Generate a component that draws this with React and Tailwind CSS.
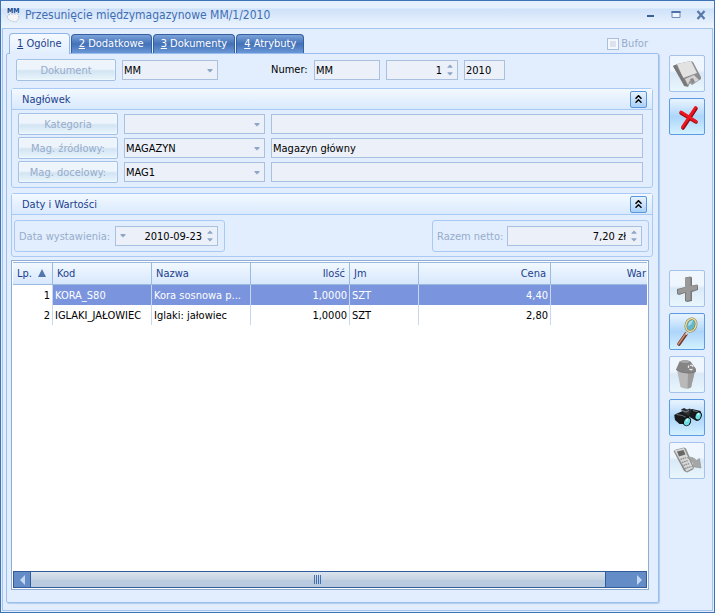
import { useState } from 'react';

const ArrowDown = ({ className = '' }) => (
    <svg viewBox="0 0 6 4" className={`h-[4px] w-[6px] shrink-0 fill-[#8fa6c6] ${className}`} aria-hidden="true">
        <path d="M.5 0h5v1L3 3.500.5 1z" />
    </svg>
);

const Spinner = () => (
    <svg viewBox="0 0 6 12" className="mr-[4px] h-[12px] w-[6px] shrink-0 fill-[#8fa6c6]" aria-hidden="true">
        <path d="M3 .5l2.500 2.500v.7h-5V3zM.5 8.300h5V9L3 11.500.5 9z" />
    </svg>
);

const LookupButton = ({ children }) => (
    <button
        type="button"
        className="h-[22px] w-[100px] shrink-0 rounded-[2px] border border-[#a3c0e6] bg-linear-to-b from-[#eef4fb] from-45% via-[#d3e4f3] via-55% to-[#e9f6fb] pt-px text-center text-[#96accb] shadow-[inset_0_0_2px_#ffffff]"
    >
        {children}
    </button>
);

const SelectField = ({ label, value, className }) => (
    <div className={`relative h-[20px] shrink-0 border border-[#a9c0e0] bg-[#ecf0f9] ${className}`}>
        <select aria-label={label} defaultValue={value} className="block h-[18px] w-full appearance-none pt-px pl-px text-black">
            <option>{value}</option>
        </select>
        <ArrowDown className="pointer-events-none absolute top-[8px] right-[4px]" />
    </div>
);

const TextField = ({ label, value, className = '' }) => (
    <input
        type="text"
        aria-label={label}
        defaultValue={value}
        className={`h-[20px] border border-[#a9c0e0] bg-[#ecf0f9] pl-px text-black ${className}`}
    />
);

const SpinField = ({ id, value, dropdown, className }) => (
    <div className={`flex h-[20px] items-center border border-[#a9c0e0] bg-[#ecf0f9] ${className}`}>
        {dropdown && <ArrowDown className="ml-[4px]" />}
        <input
            id={id}
            type="text"
            defaultValue={value}
            className="h-[18px] w-full min-w-0 flex-1 pr-[5px] text-right text-black"
        />
        <Spinner />
    </div>
);

const Group = ({ title, children }) => {
    const [open, setOpen] = useState(true);

    return (
        <section className="rounded-[3px] border border-[#a9caf3]">
            <div className="flex h-[21px] items-center justify-between border-b border-[#a9caf3] bg-linear-to-b from-[#f3f9ff] to-[#d9e9fd] pr-[5px] pl-[10px]">
                <h2 className="pt-px text-[#1c418c]">{title}</h2>
                <button
                    type="button"
                    aria-label={title}
                    onClick={() => setOpen(!open)}
                    className="flex h-[17px] w-[17px] items-center justify-center rounded-[2px] border border-[#5a96dc] bg-linear-to-b from-[#e8f3fe] to-[#a9d0f7]"
                >
                    <svg viewBox="0 0 7 8" className="h-[8px] w-[7px] fill-none stroke-black stroke-[1.5]">
                        <path d="M.5 3.700l3-3 3 3M.5 7.700l3-3 3 3" />
                    </svg>
                </button>
            </div>
            {open && children}
        </section>
    );
};

const SaveIcon = () => (
    <>
        <path d="M4 11l4-2 14-3 2 1 8 15v2l-9 6-2-2-2 4-4-1z" fill="#8d8d8d" />
        <path d="M8 9l14-3 6 12-14 5z" fill="#e2e2e2" />
        <path d="M4 11l3-1 12 21-3 0z" fill="#777" />
        <path d="M16 24l9-4 5 5-7 4-2-4-2 5z" fill="#d4d4d4" />
        <path d="M21 24l3-1 2 4-3 2z" fill="#8a8a8a" />
    </>
);

const CloseIcon = () => (
    <g fill="none" strokeLinecap="round">
        <path d="M27 10.500L14 30M12 15l15 9" stroke="#8f0a10" strokeWidth="3.500" />
        <path d="M26.500 9.500L13.500 29M12 14l15 9.500" stroke="#ee151c" strokeWidth="2.800" />
    </g>
);

const AddIcon = () => (
    <g>
        <path d="M16 7.500l5.500-1 1.500 1v8l5-1 1 1v4.500l-6 2v9l-5 1-2-1v-8l-6 2-2-1v-5l8-2z" fill="#777" />
        <path d="M16 8l5.500-1v9l6.500-1v4.500l-6.500 1.500v9l-4.500 1v-9l-8 2v-4.500l7-2z" fill="#999" />
    </g>
);

const ZoomIcon = () => (
    <>
        <path d="M17 21L10 31" stroke="#6e3428" strokeWidth="3.600" strokeLinecap="round" />
        <path d="M16.500 21L9.500 31" stroke="#c98a6f" strokeWidth="1.500" strokeLinecap="round" />
        <path d="M19.500 17.500l-2.500 4" stroke="#d8d8d8" strokeWidth="2" />
        <ellipse cx="22" cy="12" rx="5" ry="6.500" transform="rotate(20 22 12)" fill="#63b6cb" stroke="#8d8150" strokeWidth="2.500" />
        <ellipse cx="22" cy="12" rx="5" ry="6.500" transform="rotate(20 22 12)" fill="none" stroke="#eee3a4" strokeWidth="1.300" />
        <path d="M19 13q0-5 5-6-1 5-5 6z" fill="#a9dce8" />
    </>
);

const TrashIcon = () => (
    <>
        <path d="M8 14l3.500 17q5.500 3 10.500.5L26 15z" fill="#b9b9b9" />
        <path d="M19 17l7-2-4 16.500-3.500 1.300z" fill="#9c9c9c" />
        <path d="M7 13.500L10.500 5.500q5.500-2.500 11 0L27 13v2.500q-4 2-9.500 1.500-7-.5-10.500-3.500z" fill="#858585" />
        <path d="M10.500 5.500q5.500-2.500 11 0l-3 1.500q-5 .5-8-1.500z" fill="#a8a8a8" />
        <path d="M7 13.500q4 3 10.500 3.500 5.500.5 9.500-1.500" fill="none" stroke="#6f6f6f" strokeWidth=".7" />
        <path d="M21 9.500q2.500-1 3 1.500M23.500 13q-1.500 1.500-3 0M19.500 12q-.5-1.500.5-2.500" fill="none" stroke="#e6e6e6" strokeWidth="1.300" />
    </>
);

const SearchIcon = () => (
    <>
        <path d="M8 14.500l8-3.500 5 5-1 3-5 6-4.500 0-4.500-4-.8-5z" fill="#17191b" />
        <path d="M19 11.500l4-1.500 8.500 2 1.500 4-2.500 5-3 1-6-3.500-3-3z" fill="#17191b" />
        <path d="M12 10.500l3-1.500 3 1.500 3-1 1.500 2-3 5.500-5-3z" fill="#2b2f32" />
        <path d="M7.500 15.500l6 1 3.500 2M24 11.500l5 1.500" fill="none" stroke="#6d7478" strokeWidth="1" />
        <path d="M13 11.500l4 1.500 3-1.500" fill="none" stroke="#999fa3" strokeWidth=".8" />
        <ellipse cx="18" cy="22.500" rx="4" ry="4.800" transform="rotate(25 18 22.500)" fill="#111" />
        <ellipse cx="18.200" cy="22.700" rx="2.800" ry="3.800" transform="rotate(25 18 22.500)" fill="#6edfe0" />
        <ellipse cx="29" cy="17" rx="3.600" ry="4.600" transform="rotate(20 29 17)" fill="#111" />
        <ellipse cx="29.200" cy="17" rx="2.500" ry="3.500" transform="rotate(20 29 17)" fill="#6edfe0" />
        <path d="M17 22l2-2M28.500 16l1.500-1.500" stroke="#d4ffff" strokeWidth="1.300" />
    </>
);

const PhoneIcon = () => (
    <>
        <path d="M4.500 9L7 7.500l8-2 2 1 8 19-1 2-6 3-3-1.500z" fill="#8e8e8e" />
        <path d="M5.500 8.500L15 6l9 20-6.500 3.500z" fill="#dadada" />
        <path d="M8 9.500L14.500 8l2 4.500L10 14.500z" fill="#686868" />
        <path d="M11.500 17.500l6-2M13 20.500l6-2M14.500 23.500l6-2M16 26.500l6-2" stroke="#949494" strokeWidth="1.500" strokeDasharray="1.600 .6" />
        <path d="M18 15.500q6-1.500 9.500 3l3-2 1.500 9.500-9.500-1.500 2.500-2.500q-2.500-4-7-6.500z" fill="#a6a6a6" stroke="#8a8a8a" strokeWidth=".5" />
    </>
);

const ToolButton = ({ label, icon: Icon, active }) => (
    <button
        type="button"
        aria-label={label}
        className={`block h-[37px] w-[36px] rounded-[2px] border bg-linear-to-b ${
            active
                ? 'border-[#5c9ae2] from-[#e5f2fe] from-5% via-[#add5fa] via-50% to-[#d3f1ff]'
                : 'border-[#a5c2e8] from-[#f0f6fd] from-40% via-[#d9e9f7] via-50% to-[#e9f6fc]'
        }`}
    >
        <svg viewBox="1 1 34 35" className="h-[35px] w-[34px]">
            <Icon />
        </svg>
    </button>
);

const tabs = ['Ogólne', 'Dodatkowe', 'Dokumenty', 'Atrybuty'];

const warehouses = [
    { button: 'Kategoria', code: '', name: '' },
    { button: 'Mag. źródłowy:', code: 'MAGAZYN', name: 'Magazyn główny' },
    { button: 'Mag. docelowy:', code: 'MAG1', name: '' },
];

const items = [
    { lp: 1, code: 'KORA_S80', name: 'Kora sosnowa p...', qty: '1,0000', unit: 'SZT', price: '4,40' },
    { lp: 2, code: 'IGLAKI_JAŁOWIEC', name: 'Iglaki: jałowiec', qty: '1,0000', unit: 'SZT', price: '2,80' },
];

const TitleBar = () => (
    <header className="flex h-[27px] items-center bg-linear-to-b from-[#e4f0fe] from-25% via-[#cfe2f9] via-30% to-[#edf5fe] pr-[8px] pl-[5px]">
        <svg viewBox="0 0 16 18" className="h-[18px] w-[16px]" aria-hidden="true">
            <path d="M2 9l3-1h7l1 4-3 4-5-1-4-3z" fill="#f5f5f7" stroke="#a9b3c6" strokeWidth=".7" strokeDasharray="2 1" />
            <text x="1" y="7" className="fill-[#174a8c] font-['DejaVu_Sans_Condensed'] text-[7px] font-bold">MM</text>
        </svg>
        <h1 className="ml-[3px] flex-1 text-[12px] text-[#3f6db3]">Przesunięcie międzymagazynowe MM/1/2010</h1>
        <div className="flex gap-[15px]">
            <button type="button" aria-label="Minimalizuj">
                <svg viewBox="0 0 10 10" className="h-[10px] w-[10px]"><path d="M1 5h7v2H1z" fill="#3c5f94" /></svg>
            </button>
            <button type="button" aria-label="Maksymalizuj">
                <svg viewBox="0 0 10 10" className="h-[10px] w-[10px]">
                    <path d="M1 1.500h8v6H1z" fill="#f1f6fd" stroke="#6b8cbc" /><path d="M.5 1h9v2h-9z" fill="#4d73aa" />
                </svg>
            </button>
            <button type="button" aria-label="Zamknij">
                <svg viewBox="0 0 10 10" className="h-[10px] w-[10px]"><path d="M1.500 1l7 8M8.500 1l-7 8" stroke="#5878a8" strokeWidth="2.200" /></svg>
            </button>
        </div>
    </header>
);

const Tabs = () => (
    <div className="flex h-[20px] items-end gap-px pr-[11px] pl-[3px]">
        {tabs.map((tab, i) => (
            <button
                key={tab}
                type="button"
                className={
                    i === 0
                        ? 'relative z-10 -mb-px h-[21px] shrink-0 rounded-t-[4px] border border-b-0 border-[#8fb5e9] bg-linear-to-b from-[#f5faff] to-[#e2eefe] px-[7px] text-[#1c418c]'
                        : 'h-[19px] shrink-0 rounded-t-[4px] border border-b-0 border-[#365f9f] bg-linear-to-b from-[#7ca3da] via-[#4472b8] via-50% to-[#6a97d6] px-[7px] text-white'
                }
            >
                <span className="underline">{i + 1}</span> {tab}
            </button>
        ))}
        <label className="mb-[2px] ml-auto flex items-center gap-[2px] text-[#96accb]">
            <input
                type="checkbox"
                className="h-[12px] w-[12px] appearance-none border border-[#a9c0e0] bg-[#dce3ef] shadow-[inset_0_0_0_2px_#f4f7fc]"
            />
            Bufor
        </label>
    </div>
);

const ItemsTable = () => {
    const th = 'border-y border-r border-[#9cb9df] pt-px font-normal';

    return (
        <div className="mt-[3px] mr-[4px] flex flex-1 flex-col border border-[#8fadd4] bg-white p-px">
            <div className="flex-1 overflow-hidden">
                <table className="w-full table-fixed border-separate border-spacing-0 whitespace-nowrap">
                    <colgroup>
                        <col className="w-[40px]" />
                        <col className="w-[99px]" />
                        <col className="w-[99px]" />
                        <col className="w-[99px]" />
                        <col className="w-[69px]" />
                        <col className="w-[132px]" />
                        <col />
                    </colgroup>
                    <thead>
                        <tr className="h-[23px] bg-linear-to-b from-[#f3f9ff] to-[#d6e7fc] text-left text-[#1c418c]">
                            <th className={`${th} pl-[4px]`}>
                                Lp.
                                <svg viewBox="0 0 8 8" className="ml-[6px] inline h-[8px] w-[8px] align-baseline"><path d="M4 0l4 8H0z" fill="#5476ad" /></svg>
                            </th>
                            <th className={`${th} pl-[4px]`}>Kod</th>
                            <th className={`${th} pl-[4px]`}>Nazwa</th>
                            <th className={`${th} pr-[4px] text-right`}>Ilość</th>
                            <th className={`${th} pl-[4px]`}>Jm</th>
                            <th className={`${th} pr-[4px] text-right`}>Cena</th>
                            <th className="border-y border-[#9cb9df] pt-px pr-px text-right font-normal">War</th>
                        </tr>
                    </thead>
                    <tbody className="[&_td]:border-r [&_td]:border-[#c5d8f0] [&_td]:pt-[2px] [&_td:last-child]:border-r-0">
                        {items.map((item, i) => (
                            <tr key={item.lp} className={i === 0 ? 'h-[20px] bg-[#7a94dd] text-white' : 'h-[20px] text-black'}>
                                <td className="bg-white pr-[2px] text-right text-black">{item.lp}</td>
                                <td className="pl-[2px]">{item.code}</td>
                                <td className="pl-[2px]">{item.name}</td>
                                <td className="pr-[2px] text-right">{item.qty}</td>
                                <td className="pl-[2px]">{item.unit}</td>
                                <td className="pr-[2px] text-right">{item.price}</td>
                                <td />
                            </tr>
                        ))}
                    </tbody>
                </table>
            </div>
            <div className="flex h-[17px] border border-[#305c9c] bg-[#648dc8]">
                <button type="button" aria-label="W lewo" className="flex w-[16px] items-center justify-center">
                    <svg viewBox="0 0 5 10" className="h-[10px] w-[5px]"><path d="M5 0v10L0 5z" fill="#c4d8f2" /></svg>
                </button>
                <div className="flex flex-1 items-center justify-center border-x border-[#305c9c] bg-linear-to-b from-[#dde5ed] from-0% via-[#c6d4e3] via-45% to-[#c3d3e5] shadow-[inset_0_-7px_0_#adc2db80]">
                    <svg viewBox="0 0 8 9" className="h-[9px] w-[8px]"><path d="M.5 0v9M2.500 0v9M4.500 0v9M6.500 0v9" stroke="#4470af" /></svg>
                </div>
                <button type="button" aria-label="W prawo" className="flex w-[40px] items-center justify-end pr-[4px]">
                    <svg viewBox="0 0 5 10" className="h-[10px] w-[5px]"><path d="M0 0v10l5-5z" fill="#c4d8f2" /></svg>
                </button>
            </div>
        </div>
    );
};

const App = () => {
    return (
        <div className="flex min-h-screen flex-col border border-[#3e73b3] bg-[#e2eefe] font-['DejaVu_Sans_Condensed','DejaVu_Sans',sans-serif] text-[11px] leading-[14px]">
            <TitleBar />
            <div className="mx-px mb-px flex flex-1 border border-[#a2c4ef]">
                <main className="flex min-w-0 flex-1 flex-col pt-[4px] pb-[7px] pl-[3px]">
                    <Tabs />
                    <div className="flex flex-1 flex-col rounded-[2px] border border-[#9abfee] pr-[5px] pb-[12px] pl-[4px] shadow-[1px_1px_1px_#b5cdec]">
                        <div className="mt-[5px] mb-[7px] flex h-[22px] items-center gap-[6px] pl-[5px]">
                            <LookupButton>Dokument</LookupButton>
                            <SelectField label="Dokument" value="MM" className="w-[96px]" />
                            <label htmlFor="number" className="ml-[47px] w-[37px] whitespace-nowrap text-black">Numer:</label>
                            <TextField label="Symbol" value="MM" className="w-[66px]" />
                            <SpinField id="number" value="1" className="w-[72px]" />
                            <TextField label="Rok" value="2010" className="w-[41px]" />
                        </div>
                        <Group title="Nagłówek">
                            <div className="flex flex-col gap-[2px] pt-[3px] pr-[9px] pb-[4px] pl-[6px]">
                                {warehouses.map((row) => (
                                    <div key={row.button} className="flex items-center gap-[6px]">
                                        <LookupButton>{row.button}</LookupButton>
                                        <SelectField label={row.button} value={row.code} className="w-[141px]" />
                                        <TextField label={`${row.button} nazwa`} value={row.name} className="min-w-0 flex-1" />
                                    </div>
                                ))}
                            </div>
                        </Group>
                        <div className="mt-[5px]">
                            <Group title="Daty i Wartości">
                                <div className="flex justify-between pt-[5px] pr-[3px] pb-[4px] pl-[2px]">
                                    <div className="flex h-[32px] w-[211px] items-center justify-between rounded-[3px] border border-[#a9caf3] pr-[6px] pl-[4px]">
                                        <label htmlFor="date" className="pt-px whitespace-nowrap text-[#96accb]">Data wystawienia:</label>
                                        <SpinField id="date" value="2010-09-23" dropdown className="w-[103px]" />
                                    </div>
                                    <div className="flex h-[32px] w-[217px] items-center justify-between rounded-[3px] border border-[#a9caf3] pr-[6px] pl-[4px]">
                                        <label htmlFor="total" className="pt-px whitespace-nowrap text-[#96accb]">Razem netto:</label>
                                        <SpinField id="total" value="7,20 zł" className="w-[135px]" />
                                    </div>
                                </div>
                            </Group>
                        </div>
                        <ItemsTable />
                    </div>
                </main>
                <aside className="flex shrink-0 flex-col gap-[6px] pt-[26px] pr-[7px] pl-[10px]">
                    <ToolButton label="Zapisz" icon={SaveIcon} />
                    <ToolButton label="Anuluj" icon={CloseIcon} active />
                    <div className="h-[123px]" />
                    <ToolButton label="Dodaj" icon={AddIcon} />
                    <ToolButton label="Podgląd" icon={ZoomIcon} active />
                    <ToolButton label="Usuń" icon={TrashIcon} />
                    <ToolButton label="Szukaj" icon={SearchIcon} active />
                    <ToolButton label="Kolektor" icon={PhoneIcon} />
                </aside>
            </div>
        </div>
    );
};

export default App;
